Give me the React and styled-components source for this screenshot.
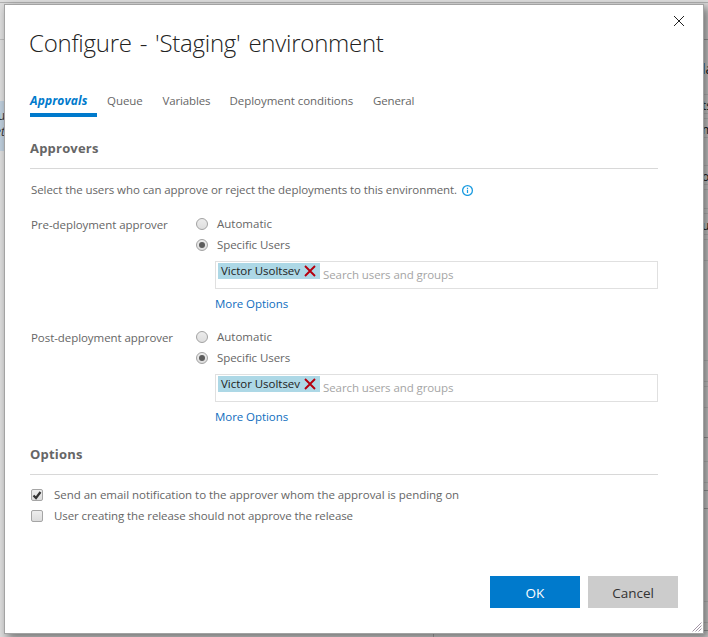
import React from "react";
import styled, { createGlobalStyle, css } from "styled-components";

const Global = createGlobalStyle`
  * { box-sizing: border-box; }
  body {
    margin: 0;
    overflow: hidden;
    font: 11.5px/20px "Open Sans", "Noto Sans", sans-serif;
    color: #666;
  }
  button, input { font: inherit; }
`;

const Page = styled.div`
  position: relative;
  width: 708px;
  height: 637px;
  overflow: hidden;
  background: #dedede;
`;

const Backdrop = styled.div`
  height: 637px;
  padding-top: 2px;
`;

const BackdropBody = styled.div`
  display: flex;
  justify-content: space-between;
  height: 635px;
  border-top: 1px solid #b2b2b2;
`;

const LeftRail = styled.div`
  width: 434px;
  padding-top: 36px;
`;

const LeftPanel = styled.div`
  height: 598px;
  padding-top: 61px;
  border-top: 1px solid #bdbdbd;
  border-right: 1px solid #b0b0b0;
`;

const Selection = styled.div`
  display: flex;
  flex-direction: column;
  width: 8px;
  height: 50px;
  padding-top: 7px;
  background: #bfcfdd;
  color: #333;
  font-size: 12px;
  line-height: 16px;
`;

const SelectionLine = styled.div`
  display: flex;
  justify-content: flex-end;
  width: 5px;
  white-space: nowrap;
  font-style: ${(p) => (p.$italic ? "italic" : "normal")};
`;

const RightRail = styled.div`
  width: 6px;
  overflow: hidden;
`;

const RailRow = styled.div`
  display: flex;
  align-items: center;
  height: ${(p) => p.$h}px;
  padding-top: ${(p) => (p.$h > 10 ? 3 : 0)}px;
  border-bottom: 1px solid ${(p) => (p.$strong ? "#a6a6a6" : "#c9c9c9")};
  font-size: ${(p) => (p.$large ? 14 : 12)}px;
  color: #222;
  white-space: nowrap;
`;

const Dialog = styled.section`
  position: absolute;
  left: 4px;
  top: 4px;
  display: flex;
  flex-direction: column;
  width: 700px;
  height: 630px;
  padding: 0 25px;
  border: 1px solid #a3a3a3;
  background: #fff;
  box-shadow: 4px 4px 9px 1px rgba(0, 0, 0, 0.45);
`;

const Header = styled.header`
  display: flex;
  justify-content: space-between;
  height: 84px;
  margin-right: -9px;
`;

const Title = styled.h1`
  margin: 21px 0 0 -1px;
  font-size: 24px;
  font-weight: 300;
  line-height: 34px;
  letter-spacing: -0.25px;
  word-spacing: 2px;
  color: #222;
  white-space: nowrap;
`;

const Close = styled.button`
  display: flex;
  width: 16px;
  height: 16px;
  margin-top: 8px;
  padding: 2px;
  border: 0;
  background: none;
`;

const Tabs = styled.nav`
  display: flex;
  height: 28px;
`;

const Tab = styled.button`
  height: 28px;
  width: ${(p) => p.$w}px;
  padding: 0 0 4px;
  border: 0;
  background: none;
  color: #666;
  text-align: left;
  line-height: 20px;
  white-space: nowrap;
  ${(p) =>
    p.$active &&
    css`
      margin-right: 10px;
      border-bottom: 4px solid #007acc;
      padding-bottom: 0;
      color: #007acc;
      font-size: 12px;
      font-weight: 700;
      font-style: italic;
    `}
`;

const SectionTitle = styled.h2`
  width: 628px;
  height: ${(p) => p.$h}px;
  margin: 0;
  padding-bottom: 10px;
  display: flex;
  align-items: flex-end;
  border-bottom: 1px solid #d8d8d8;
  color: #666;
  font-size: 13px;
  font-weight: 700;
  line-height: 20px;
  letter-spacing: 0.2px;
`;

const Text = styled.span`
  letter-spacing: ${(p) => p.$track ?? -0.06}px;
  white-space: nowrap;
`;

const Description = styled.div`
  display: flex;
  align-items: center;
  height: 20px;
  margin: 11px 0 14px 1px;
  gap: 5px;
`;

const ApproverGroup = styled.div`
  display: grid;
  grid-template-columns: 165px 462px;
  height: 113px;
  margin-left: 1px;
`;

const GroupLabel = styled.div`
  padding-top: 1px;
`;

const GroupBody = styled.div`
  margin-top: -1px;
`;

const Choice = styled.label`
  display: flex;
  align-items: center;
  height: 21px;
  gap: ${(p) => p.$gap}px;
`;

const Radio = styled.span`
  display: grid;
  place-items: center;
  flex: none;
  width: 12px;
  height: 12px;
  border: 1px solid #a2a2a2;
  border-radius: 50%;
  background: linear-gradient(#ececec, #dedede);
  &::after {
    content: "";
    width: 6px;
    height: 6px;
    border-radius: 50%;
    background: ${(p) => (p.$on ? "#5c5c5c" : "transparent")};
  }
`;

const Checkbox = styled.span`
  display: flex;
  flex: none;
  width: 12px;
  height: 12px;
  border: 1px solid #a5a5a5;
  border-radius: 2px;
  background: linear-gradient(#ededed, #dcdcdc);
`;

const UserField = styled.div`
  display: flex;
  width: 443px;
  height: 28px;
  margin: 6px 0 5px 19px;
  padding: 1px 2px;
  border: 1px solid #e0e0e0;
`;

const Chip = styled.span`
  display: flex;
  align-items: center;
  justify-content: space-between;
  width: 102px;
  height: 16px;
  padding: 0 4px 0 3px;
  background: #add8e6;
  color: #222;
`;

const Search = styled.span`
  padding: 2px 0 0 3px;
  color: #a5a5a5;
  white-space: nowrap;
`;

const More = styled.a`
  display: block;
  margin-left: 19px;
  color: #106ebe;
`;

const Options = styled.div`
  padding: 9px 0 0 1px;
`;

const Footer = styled.footer`
  display: flex;
  justify-content: flex-end;
  gap: 8px;
  margin-top: auto;
  padding-bottom: 25px;
`;

const Button = styled.button`
  width: 90px;
  height: 32px;
  padding: 2px 0 0;
  border: 0;
  background: ${(p) => (p.$primary ? "#007acc" : "#ccc")};
  color: ${(p) => (p.$primary ? "#fff" : "#333")};
  font-size: 13.5px;
`;

const Grip = styled.svg`
  position: absolute;
  right: 1px;
  bottom: 1px;
`;

const backdropRows = [
  [37, "", true], [55, "la", false, true], [19, "ts"], [5, ""], [19, "me"], [28, ""], [19, "or"],
  [5, ""], [19, ""], [5, ""], [21, "u"], [5, ""], [21, ""], [100, ""], [21, ""], [5, ""],
  [21, ""], [30, "", true], [24, ""], [21, ""], [8, "", true], [18, "", true], [93, ""], [21, ""], [8, "", true],
];

function Approver({ label }) {
  return (
    <ApproverGroup>
      <GroupLabel><Text>{label}</Text></GroupLabel>
      <GroupBody>
        <Choice $gap={9}><Radio /><Text $track={0}>Automatic</Text></Choice>
        <Choice $gap={9}><Radio $on /><Text>Specific Users</Text></Choice>
        <UserField>
          <Chip>
            <Text $track={-0.03}>Victor Usoltsev</Text>
            <svg width="12" height="12" viewBox="0 0 12 12">
              <path d="M1 1 L11 11 M11 1 L1 11" stroke="#b5000e" strokeWidth="1.9" />
            </svg>
          </Chip>
          <Search><Text $track={-0.09}>Search users and groups</Text></Search>
        </UserField>
        <More><Text>More Options</Text></More>
      </GroupBody>
    </ApproverGroup>
  );
}

export default function App() {
  return (
    <Page>
      <Global />
      <Backdrop>
        <BackdropBody>
          <LeftRail>
            <LeftPanel>
              <Selection>
                <SelectionLine>u</SelectionLine>
                <SelectionLine $italic>et</SelectionLine>
              </Selection>
            </LeftPanel>
          </LeftRail>
          <RightRail>
            {backdropRows.map(([h, t, strong, large], i) => (
              <RailRow key={i} $h={h} $strong={strong} $large={large}>{t}</RailRow>
            ))}
          </RightRail>
        </BackdropBody>
      </Backdrop>
      <Dialog>
        <Header>
          <Title>Configure - 'Staging' environment</Title>
          <Close aria-label="Close">
            <svg width="12" height="12" viewBox="0 0 12 12">
              <path d="M1 1 L11 11 M11 1 L1 11" stroke="#222" strokeWidth="1" />
            </svg>
          </Close>
        </Header>
        <Tabs>
          <Tab $active $w={67}><Text $track={0.12}>Approvals</Text></Tab>
          <Tab $w={55.5}><Text>Queue</Text></Tab>
          <Tab $w={67}><Text $track={-0.15}>Variables</Text></Tab>
          <Tab $w={143.5}><Text $track={-0.04}>Deployment conditions</Text></Tab>
          <Tab $w={60}><Text $track={-0.15}>General</Text></Tab>
        </Tabs>
        <SectionTitle $h={52}>Approvers</SectionTitle>
        <Description>
          <Text $track={-0.08}>Select the users who can approve or reject the deployments to this environment.</Text>
          <svg width="12" height="12" viewBox="0 0 12 12">
            <circle cx="5.5" cy="6.5" r="4.9" fill="none" stroke="#1a9be0" strokeWidth="1.3" />
            <path d="M5.5 5.7 V9 M5.5 3.7 V4.9" stroke="#1a9be0" strokeWidth="1.2" />
          </svg>
        </Description>
        <Approver label="Pre-deployment approver" />
        <Approver label="Post-deployment approver" />
        <SectionTitle $h={35}>Options</SectionTitle>
        <Options>
          <Choice $gap={11}>
            <Checkbox>
              <svg width="10" height="10" viewBox="0 0 10 10">
                <path d="M1.5 5.5 L4 8 L8.5 2" fill="none" stroke="#333" strokeWidth="2.2" />
              </svg>
            </Checkbox>
            <Text $track={-0.04}>Send an email notification to the approver whom the approval is pending on</Text>
          </Choice>
          <Choice $gap={11}>
            <Checkbox />
            <Text $track={-0.09}>User creating the release should not approve the release</Text>
          </Choice>
        </Options>
        <Footer>
          <Button $primary>OK</Button>
          <Button>Cancel</Button>
        </Footer>
        <Grip width="10" height="10" viewBox="0 0 10 10">
          <path d="M0.5 9.5 L9.5 0.5 M3.5 9.5 L9.5 3.5 M6.5 9.5 L9.5 6.5" stroke="#a396a6" strokeWidth="1" />
        </Grip>
      </Dialog>
    </Page>
  );
}
